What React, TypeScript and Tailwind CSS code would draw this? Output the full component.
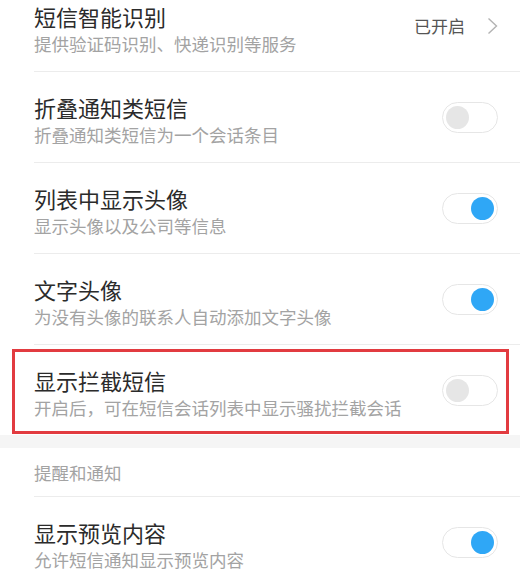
import React from 'react';

type Item = {
  title: string;
  desc: string;
  on?: boolean;
  status?: string;
};

const Toggle: React.FC<{ on: boolean }> = ({ on }) => (
  <div
    className={`flex h-[31px] w-[56px] shrink-0 items-center rounded-full border border-[#e6e6e6] bg-white px-[3px] ${
      on ? 'justify-end' : 'justify-start'
    }`}
  >
    <div className={`h-[23px] w-[23px] rounded-full ${on ? 'bg-[#2fa7f6]' : 'bg-[#e6e6e6]'}`} />
  </div>
);

const Row: React.FC<{ item: Item; divider?: boolean; height?: string }> = ({ item, divider = true, height = 'h-[91px]' }) => (
  <div className="pl-[34px]">
    <div className={`flex items-center ${height} pr-[22px] ${divider ? 'border-b border-[#ececec]' : ''}`}>
      <div className="mt-[6px] flex-1">
        <div className="text-[22px] leading-[28px] text-[#2b2b2b]">{item.title}</div>
        <div className="mt-[2px] text-[17.5px] leading-[24px] text-[#a3a3a3]">{item.desc}</div>
      </div>
      {item.status ? (
        <div className="flex items-center gap-[22px]">
          <span className="text-[17px] text-[#555]">{item.status}</span>
          <svg width="11" height="18" viewBox="0 0 11 18" fill="none">
            <path d="M1.5 1.5 L9.5 9 L1.5 16.5" stroke="#b3b3b3" strokeWidth="1.4" />
          </svg>
        </div>
      ) : (
        <Toggle on={!!item.on} />
      )}
    </div>
  </div>
);

const items: Item[] = [
  { title: '短信智能识别', desc: '提供验证码识别、快递识别等服务', status: '已开启' },
  { title: '折叠通知类短信', desc: '折叠通知类短信为一个会话条目', on: false },
  { title: '列表中显示头像', desc: '显示头像以及公司等信息', on: true },
  { title: '文字头像', desc: '为没有头像的联系人自动添加文字头像', on: true },
];

export default function App() {
  return (
    <div
      className="h-[583px] w-[520px] overflow-hidden bg-white"
      style={{ fontFamily: '"Noto Sans CJK SC", "Noto Sans", sans-serif' }}
    >
      <div className="-mt-[19px]">
        {items.map((item) => (
          <Row key={item.title} item={item} />
        ))}

        {/* highlighted row */}
        <div className="relative">
          <Row
            item={{ title: '显示拦截短信', desc: '开启后，可在短信会话列表中显示骚扰拦截会话', on: false }}
            divider={false}
            height="h-[90px]"
          />
          <div className="pointer-events-none absolute top-[4px] right-[11px] bottom-[1px] left-[12px] border-[3px] border-[#e23b40]" />
        </div>

        <div className="h-[13px] bg-[#f5f5f5]" />

        <div className="pl-[34px]">
          <div className="flex h-[49px] items-center border-b border-[#ececec] pt-[2px] text-[17.5px] text-[#a3a3a3]">
            提醒和通知
          </div>
        </div>

        <Row item={{ title: '显示预览内容', desc: '允许短信通知显示预览内容', on: true }} />
      </div>
    </div>
  );
}
